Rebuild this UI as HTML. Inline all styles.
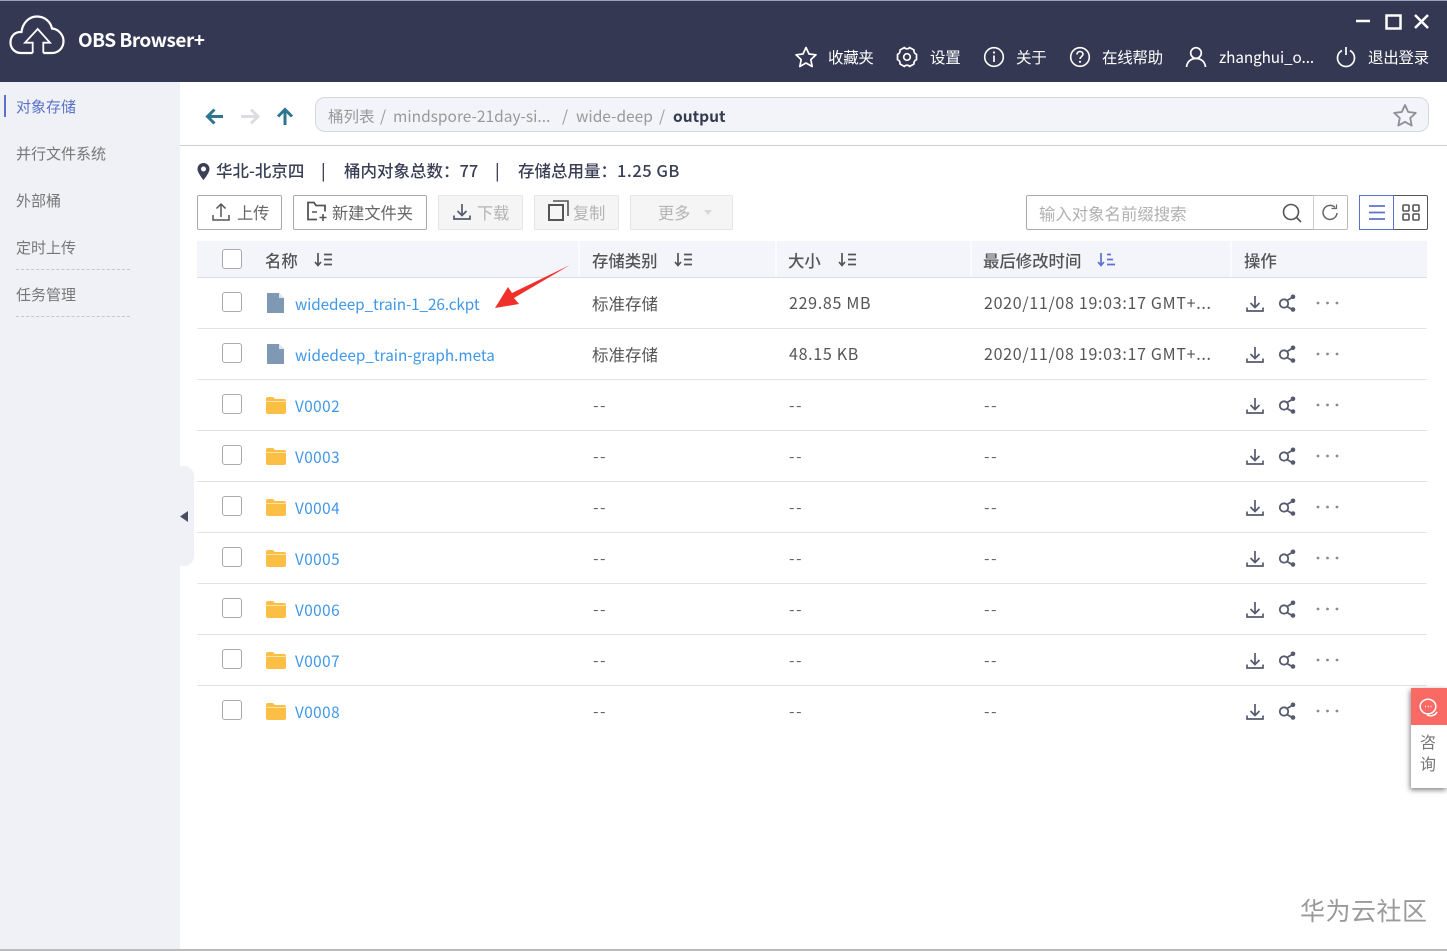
<!DOCTYPE html>
<html lang="zh"><head><meta charset="utf-8"><title>OBS Browser+</title>
<style>
*{box-sizing:border-box}
html,body{margin:0;padding:0;width:1447px;height:951px;overflow:hidden;background:#fff}
body{position:relative;font-family:"Noto Sans CJK SC","Liberation Sans",sans-serif;color:#555}
.a{position:absolute;white-space:nowrap;line-height:20px}
svg{position:absolute;overflow:visible;fill:none}
.hd{color:#fff;font-size:15.5px;letter-spacing:-.3px;top:47px}
.side{font-size:15px;color:#777;left:16px}
.btn{position:absolute;top:195px;height:35px;border:1px solid #aaa;border-radius:2px;background:#fff}
.dis{background:#f5f5f6;border-color:#e6e6e8}
.bt{font-size:16.2px;top:202px;color:#666}
.th{font-size:16.4px;color:#555;font-weight:500;top:250px}
.cb{position:absolute;left:222px;width:20px;height:20px;border:1px solid #aaa;border-radius:3px;background:#fff}
.ln{position:absolute;left:197px;width:1230px;height:1px;background:#e2e2e4}
.nm{left:295px;font-size:15.3px;color:#3f97e8}
.v{letter-spacing:.45px}
.c{font-size:16.5px;color:#555}
.m{font-size:16px;letter-spacing:.7px;color:#555}
.dd{font-size:16px;letter-spacing:1.5px;color:#666}
.inf{font-size:16.5px;font-weight:500;color:#3a3f55;top:160px}
</style></head><body>
<svg width="0" height="0" style="position:absolute"><defs>
<g id="dl" stroke="#555a6e" stroke-width="1.7"><path d="M9 1v11M4.500 8l4.500 4.500L13.500 8M1 12.500v3.500h16v-3.500"/></g>
<g id="sh"><circle cx="6" cy="8.500" r="4.200" stroke="#555a6e" stroke-width="1.800"/><path d="M9 5.500l6-3.500M9 11.500l6 3.500" stroke="#555a6e" stroke-width="1.800"/><circle cx="15" cy="1.800" r="2.300" fill="#555a6e"/><circle cx="15" cy="14.500" r="2.300" fill="#555a6e"/></g>
<g id="dots" fill="#8a8a8e"><circle cx="2" cy="2" r="1.400"/><circle cx="11.500" cy="2" r="1.400"/><circle cx="21" cy="2" r="1.400"/></g>
<g id="file"><path d="M0 0h12l5 5v15H0z" fill="#7f99b4"/><path d="M12 0l5 5h-5z" fill="#dfe6ee"/></g>
<g id="fold"><path d="M0 3a2 2 0 0 1 2-2h5l2 2h9a2 2 0 0 1 2 2v11a2 2 0 0 1-2 2H2a2 2 0 0 1-2-2z" fill="#fbbf45"/><path d="M0 5.500h20" stroke="#ffe3a6" stroke-width="1"/></g>
<g id="sort" stroke="#555" stroke-width="1.700"><path d="M4 1v12M1 10l3 3.500L7 10M10 2.500h8M10 7.500h8M10 12.500h8"/></g>
</defs></svg>

<!-- header -->
<div class="a" style="left:0;top:0;width:1447px;height:82px;background:#343853;border-top:1px solid #9aa0bb"></div>
<svg style="left:9px;top:14px" width="57" height="42"><path d="M23.700 39H12C5.500 39 1.500 34 1.500 28.500c0-6 4-10.500 10-10.500h1C13.500 9 20 2.500 28 2.500c7.500 0 13.500 5 15 12 6.500.5 11.500 6.500 11.500 12.500 0 7-5 12-11.500 12H34.300" stroke="#fff" stroke-width="2.200"/><path d="M23.700 39V28.700H16L28.700 15 41 28.700H34.300V39" stroke="#fff" stroke-width="1.800"/></svg>
<div class="a" style="left:78px;top:29px;font:700 19px/22px 'Noto Sans CJK SC','Liberation Sans',sans-serif;color:#fff;letter-spacing:-.5px">OBS Browser+</div>
<svg style="left:1355px;top:14px" width="80" height="16"><path d="M1 7h14" stroke="#fff" stroke-width="2.500"/><rect x="31.500" y="1.500" width="14" height="13" stroke="#fff" stroke-width="2.500"/><path d="M60 1l13 13M73 1L60 14" stroke="#fff" stroke-width="2.500"/></svg>
<svg style="left:795px;top:46px" width="22" height="21"><path d="M11 1.500l3 6.500 7 .8-5.200 4.800 1.400 6.900L11 17l-6.200 3.500 1.400-6.900L1 8.800 8 8z" stroke="#fff" stroke-width="1.700" stroke-linejoin="round"/></svg>
<div class="a hd" style="left:828px">收藏夹</div>
<svg style="left:896px;top:46px" width="22" height="22"><path d="M8.500 1.500C9 3.200 13 3.200 13.500 1.500L18 4C17.500 6 19 8 20.500 8.300V13.700C19 14 17.500 16 18 18L13.500 20.500C13 18.800 9 18.800 8.500 20.500L4 18C4.500 16 3 14 1.500 13.700V8.300C3 8 4.500 6 4 4z" stroke="#fff" stroke-width="1.700" stroke-linejoin="round"/><circle cx="11" cy="11" r="3.300" stroke="#fff" stroke-width="1.700"/></svg>
<div class="a hd" style="left:930px">设置</div>
<svg style="left:983px;top:46px" width="22" height="22"><circle cx="11" cy="11" r="9.300" stroke="#fff" stroke-width="1.600"/><path d="M11 9.500v6.500" stroke="#fff" stroke-width="1.700"/><circle cx="11" cy="6.500" r="1.100" fill="#fff"/></svg>
<div class="a hd" style="left:1016px">关于</div>
<svg style="left:1069px;top:46px" width="22" height="22"><circle cx="11" cy="11" r="9.300" stroke="#fff" stroke-width="1.600"/><path d="M8 8.500c0-2 1.500-3 3-3s3 1 3 2.800c0 2.200-3 2.400-3 4.700" stroke="#fff" stroke-width="1.600"/><circle cx="11" cy="15.800" r="1.100" fill="#fff"/></svg>
<div class="a hd" style="left:1102px">在线帮助</div>
<svg style="left:1185px;top:46px" width="22" height="22"><circle cx="11" cy="7" r="5.300" stroke="#fff" stroke-width="1.700"/><path d="M1.500 21c.5-5 4-8.500 9.500-8.500s9 3.500 9.500 8.500" stroke="#fff" stroke-width="1.700"/></svg>
<div class="a hd" style="left:1219px;letter-spacing:-.1px;font-size:15.3px">zhanghui_o...</div>
<svg style="left:1336px;top:46px" width="20" height="22"><path d="M6 4.500a8.500 8.500 0 1 0 8 0M10 1v8" stroke="#fff" stroke-width="1.700"/></svg>
<div class="a hd" style="left:1368px">退出登录</div>

<!-- sidebar -->
<div class="a" style="left:0;top:82px;width:180px;height:869px;background:#eff1f6"></div>
<div class="a" style="left:4px;top:95px;width:2px;height:22px;background:#5c72c9"></div>
<div class="a side" style="top:97px;color:#5c72c9">对象存储</div>
<div class="a side" style="top:144px">并行文件系统</div>
<div class="a side" style="top:191px">外部桶</div>
<div class="a side" style="top:238px">定时上传</div>
<div class="a" style="left:16px;top:269px;width:114px;border-top:1px dashed #c4c6cc"></div>
<div class="a side" style="top:285px">任务管理</div>
<div class="a" style="left:16px;top:316px;width:114px;border-top:1px dashed #c4c6cc"></div>
<div class="a" style="left:176px;top:466px;width:18px;height:100px;background:#eff1f6;border-radius:0 10px 10px 0"></div>
<svg style="left:180px;top:511px" width="9" height="11"><path d="M8 0v11L0 5.500z" fill="#4a4f60"/></svg>

<!-- nav -->
<svg style="left:205px;top:107px" width="92" height="20"><path d="M18 9.500H3M9.500 2.500L2.500 9.500l7 7" stroke="#2e7690" stroke-width="3"/><path d="M36 9.500h16M46 2.500l7 7-7 7" stroke="#dcdde0" stroke-width="3"/><path d="M80 18V3M73 9.500l7-7 7 7" stroke="#2e7690" stroke-width="3"/></svg>
<div class="a" style="left:315px;top:97px;width:1114px;height:35px;background:#f3f4fa;border:1px solid #d6d7db;border-radius:10px"></div>
<div class="a" style="left:328px;top:106px;font-size:15.500px;color:#999">桶列表<span style="position:absolute;left:52px">/</span><span style="position:absolute;left:65px">mindspore-21day-si...</span><span style="position:absolute;left:234px">/</span><span style="position:absolute;left:248px">wide-deep</span><span style="position:absolute;left:331px">/</span><span style="position:absolute;left:345px;color:#333a4c;font-weight:700">output</span></div>
<svg style="left:1393px;top:103px" width="24" height="24"><path d="M12 2l3.200 7 7.600.900-5.600 5.200 1.500 7.500L12 18.800l-6.700 3.800 1.500-7.500L1.200 9.900 8.800 9z" stroke="#8d8f96" stroke-width="1.800" stroke-linejoin="round"/></svg>
<div class="a" style="left:180px;top:145px;width:1267px;height:1px;background:#ccc"></div>

<!-- info -->
<svg style="left:197px;top:163px" width="13" height="17"><path d="M6.500 0C3 0 .5 2.600.5 6c0 4 6 11 6 11s6-7 6-11c0-3.400-2.500-6-6-6zm0 8.500a2.500 2.500 0 1 1 0-5 2.500 2.500 0 0 1 0 5z" fill="#3a3f55"/></svg>
<div class="a inf" style="left:216px">华北-北京四</div>
<div class="a inf" style="left:321px">|</div>
<div class="a inf" style="left:344px">桶内对象总数：77</div>
<div class="a inf" style="left:495px">|</div>
<div class="a inf" style="left:518px">存储总用量：<span style="letter-spacing:.5px">1.25 GB</span></div>

<!-- toolbar -->
<div class="btn" style="left:197px;width:85px"></div>
<svg style="left:212px;top:202px" width="18" height="19"><path d="M9 15V2M4.500 6.500L9 2l4.500 4.500M1 13v5h16v-5" stroke="#555" stroke-width="1.500"/></svg>
<div class="a bt" style="left:237px">上传</div>
<div class="btn" style="left:293px;width:134px"></div>
<svg style="left:307px;top:201px" width="20" height="21"><path d="M10 18.500H1V1.500h6l2 3h9v6" stroke="#555" stroke-width="1.800"/><path d="M5 11h5M16 13v7M12.500 16.500h7" stroke="#555" stroke-width="1.600"/></svg>
<div class="a bt" style="left:332px">新建文件夹</div>
<div class="btn dis" style="left:438px;width:85px"></div>
<svg style="left:453px;top:203px;" width="18" height="18"><use href="#dl"/></svg>
<div class="a bt" style="left:477px;color:#b4b4b6">下载</div>
<div class="btn dis" style="left:534px;width:85px"></div>
<svg style="left:548px;top:200px" width="21" height="21"><rect x="1" y="5" width="14" height="15" stroke="#555" stroke-width="2"/><path d="M5 1h15v15" stroke="#555" stroke-width="1.600"/></svg>
<div class="a bt" style="left:573px;color:#b4b4b6">复制</div>
<div class="btn dis" style="left:630px;width:103px"></div>
<div class="a bt" style="left:658px;color:#b4b4b6">更多</div>
<svg style="left:704px;top:210px" width="8" height="5"><path d="M0 0h8L4 5z" fill="#d8d8da"/></svg>

<div class="a" style="left:1026px;top:195px;width:288px;height:35px;border:1px solid #aaa;border-radius:2px 0 0 2px"></div>
<div class="a" style="left:1039px;top:203px;font-size:16.400px;color:#b0b0b0">输入对象名前缀搜索</div>
<svg style="left:1282px;top:203px" width="20" height="20"><circle cx="9" cy="9" r="7.500" stroke="#555" stroke-width="1.600"/><path d="M14 14l5 5" stroke="#555" stroke-width="1.600"/></svg>
<div class="a" style="left:1313px;top:195px;width:35px;height:35px;border:1px solid #bbb;border-left:1px solid #ccc;border-radius:0 2px 2px 0"></div>
<svg style="left:1322px;top:204px" width="16" height="17"><path d="M13 3.500A7 7 0 1 0 15 9" stroke="#666" stroke-width="1.500"/><path d="M9.500 4.500h5v-4" stroke="#666" stroke-width="1.200"/></svg>
<div class="a" style="left:1359px;top:195px;width:35px;height:35px;border:1px solid #5c72c9"></div>
<div class="a" style="left:1394px;top:195px;width:34px;height:35px;border:1px solid #555;border-left:0;border-radius:0 2px 2px 0"></div>
<svg style="left:1369px;top:204px" width="16" height="17"><path d="M0 2h16M0 8.500h16M0 15h16" stroke="#5c72c9" stroke-width="1.800"/></svg>
<svg style="left:1402px;top:204px" width="18" height="17"><g stroke="#555" stroke-width="1.600"><rect x="1" y="1" width="6" height="6" rx="1"/><rect x="11" y="1" width="6" height="6" rx="1"/><rect x="1" y="10" width="6" height="6" rx="1"/><rect x="11" y="10" width="6" height="6" rx="1"/></g></svg>

<!-- table head -->
<div class="a" style="left:197px;top:241px;width:1230px;height:37px;background:#f3f5fb;border-bottom:1px solid #dcdde2"></div>
<div class="a" style="left:578px;top:241px;width:2px;height:36px;background:#fafbfe"></div>
<div class="a" style="left:775px;top:241px;width:2px;height:36px;background:#fafbfe"></div>
<div class="a" style="left:970px;top:241px;width:2px;height:36px;background:#fafbfe"></div>
<div class="a" style="left:1230px;top:241px;width:2px;height:36px;background:#fafbfe"></div>
<div class="cb" style="top:249px"></div>
<div class="a th" style="left:265px">名称</div>
<svg style="left:314px;top:252px" width="19" height="15"><use href="#sort"/></svg>
<div class="a th" style="left:592px">存储类别</div>
<svg style="left:674px;top:252px" width="19" height="15"><use href="#sort"/></svg>
<div class="a th" style="left:788px">大小</div>
<svg style="left:838px;top:252px" width="19" height="15"><use href="#sort"/></svg>
<div class="a th" style="left:983px">最后修改时间</div>
<svg style="left:1097px;top:252px" width="19" height="15"><g stroke="#5c72c9" stroke-width="1.700"><path d="M4 1v12M1 10l3 3.500L7 10M10 2.500h4M10 7.500h6M10 12.500h8"/></g></svg>
<div class="a th" style="left:1244px">操作</div>

<!-- rows -->
<div class="cb" style="top:292px"></div>
<svg style="left:267px;top:293px" width="17" height="20"><use href="#file"/></svg>
<div class="a nm" style="top:294px;letter-spacing:-.1px">widedeep_train-1_26.ckpt</div>
<div class="a c" style="left:592px;top:293px">标准存储</div>
<div class="a m" style="left:789px;top:292px">229.85 MB</div>
<div class="a m" style="left:984px;top:292px">2020/11/08 19:03:17 GMT+...</div>
<svg style="left:1246px;top:295px" width="18" height="18"><use href="#dl"/></svg>
<svg style="left:1278px;top:295px" width="17" height="17"><use href="#sh"/></svg>
<svg style="left:1316px;top:301px" width="24" height="4"><use href="#dots"/></svg>
<div class="ln" style="top:328px"></div>

<div class="cb" style="top:343px"></div>
<svg style="left:267px;top:344px" width="17" height="20"><use href="#file"/></svg>
<div class="a nm" style="top:345px">widedeep_train-graph.meta</div>
<div class="a c" style="left:592px;top:344px">标准存储</div>
<div class="a m" style="left:789px;top:343px">48.15 KB</div>
<div class="a m" style="left:984px;top:343px">2020/11/08 19:03:17 GMT+...</div>
<svg style="left:1246px;top:346px" width="18" height="18"><use href="#dl"/></svg>
<svg style="left:1278px;top:346px" width="17" height="17"><use href="#sh"/></svg>
<svg style="left:1316px;top:352px" width="24" height="4"><use href="#dots"/></svg>
<div class="ln" style="top:379px"></div>

<div class="cb" style="top:394px"></div><svg style="left:266px;top:396px" width="20" height="18"><use href="#fold"/></svg><div class="a nm v" style="top:396px">V0002</div><div class="a dd" style="left:593px;top:394px">--</div><div class="a dd" style="left:789px;top:394px">--</div><div class="a dd" style="left:984px;top:394px">--</div><svg style="left:1246px;top:397px" width="18" height="18"><use href="#dl"/></svg><svg style="left:1278px;top:397px" width="17" height="17"><use href="#sh"/></svg><svg style="left:1316px;top:403px" width="24" height="4"><use href="#dots"/></svg><div class="ln" style="top:430px"></div>
<div class="cb" style="top:445px"></div><svg style="left:266px;top:447px" width="20" height="18"><use href="#fold"/></svg><div class="a nm v" style="top:447px">V0003</div><div class="a dd" style="left:593px;top:445px">--</div><div class="a dd" style="left:789px;top:445px">--</div><div class="a dd" style="left:984px;top:445px">--</div><svg style="left:1246px;top:448px" width="18" height="18"><use href="#dl"/></svg><svg style="left:1278px;top:448px" width="17" height="17"><use href="#sh"/></svg><svg style="left:1316px;top:454px" width="24" height="4"><use href="#dots"/></svg><div class="ln" style="top:481px"></div>
<div class="cb" style="top:496px"></div><svg style="left:266px;top:498px" width="20" height="18"><use href="#fold"/></svg><div class="a nm v" style="top:498px">V0004</div><div class="a dd" style="left:593px;top:496px">--</div><div class="a dd" style="left:789px;top:496px">--</div><div class="a dd" style="left:984px;top:496px">--</div><svg style="left:1246px;top:499px" width="18" height="18"><use href="#dl"/></svg><svg style="left:1278px;top:499px" width="17" height="17"><use href="#sh"/></svg><svg style="left:1316px;top:505px" width="24" height="4"><use href="#dots"/></svg><div class="ln" style="top:532px"></div>
<div class="cb" style="top:547px"></div><svg style="left:266px;top:549px" width="20" height="18"><use href="#fold"/></svg><div class="a nm v" style="top:549px">V0005</div><div class="a dd" style="left:593px;top:547px">--</div><div class="a dd" style="left:789px;top:547px">--</div><div class="a dd" style="left:984px;top:547px">--</div><svg style="left:1246px;top:550px" width="18" height="18"><use href="#dl"/></svg><svg style="left:1278px;top:550px" width="17" height="17"><use href="#sh"/></svg><svg style="left:1316px;top:556px" width="24" height="4"><use href="#dots"/></svg><div class="ln" style="top:583px"></div>
<div class="cb" style="top:598px"></div><svg style="left:266px;top:600px" width="20" height="18"><use href="#fold"/></svg><div class="a nm v" style="top:600px">V0006</div><div class="a dd" style="left:593px;top:598px">--</div><div class="a dd" style="left:789px;top:598px">--</div><div class="a dd" style="left:984px;top:598px">--</div><svg style="left:1246px;top:601px" width="18" height="18"><use href="#dl"/></svg><svg style="left:1278px;top:601px" width="17" height="17"><use href="#sh"/></svg><svg style="left:1316px;top:607px" width="24" height="4"><use href="#dots"/></svg><div class="ln" style="top:634px"></div>
<div class="cb" style="top:649px"></div><svg style="left:266px;top:651px" width="20" height="18"><use href="#fold"/></svg><div class="a nm v" style="top:651px">V0007</div><div class="a dd" style="left:593px;top:649px">--</div><div class="a dd" style="left:789px;top:649px">--</div><div class="a dd" style="left:984px;top:649px">--</div><svg style="left:1246px;top:652px" width="18" height="18"><use href="#dl"/></svg><svg style="left:1278px;top:652px" width="17" height="17"><use href="#sh"/></svg><svg style="left:1316px;top:658px" width="24" height="4"><use href="#dots"/></svg><div class="ln" style="top:685px"></div>
<div class="cb" style="top:700px"></div><svg style="left:266px;top:702px" width="20" height="18"><use href="#fold"/></svg><div class="a nm v" style="top:702px">V0008</div><div class="a dd" style="left:593px;top:700px">--</div><div class="a dd" style="left:789px;top:700px">--</div><div class="a dd" style="left:984px;top:700px">--</div><svg style="left:1246px;top:703px" width="18" height="18"><use href="#dl"/></svg><svg style="left:1278px;top:703px" width="17" height="17"><use href="#sh"/></svg><svg style="left:1316px;top:709px" width="24" height="4"><use href="#dots"/></svg>

<!-- red arrow -->
<svg style="left:494px;top:264px" width="78" height="46"><path d="M76 1L20 34l5 6L1 44l13-21 4 6z" fill="#f0302a"/></svg>

<!-- consult widget -->
<div class="a" style="left:1411px;top:688px;width:36px;height:100px;background:#fff;box-shadow:-1px 2px 5px rgba(0,0,0,.5)"></div>
<div class="a" style="left:1411px;top:688px;width:36px;height:37px;background:#f96a65"></div>
<svg style="left:1419px;top:698px" width="20" height="19"><ellipse cx="9" cy="8.500" rx="7.800" ry="7.300" stroke="#fff" stroke-width="1.500"/><path d="M6 8.500h.900M8.800 8.500h.900M11.600 8.500h.900" stroke="#fff" stroke-width="1.400"/><path d="M8 17c3 1.500 8 1 10-3" stroke="#fff" stroke-width="1.400"/></svg>
<div class="a" style="left:1420px;top:731px;font-size:16px;color:#777">咨</div>
<div class="a" style="left:1420px;top:753px;font-size:16px;color:#777">询</div>

<div class="a" style="left:1300px;top:895px;font-size:25px;line-height:30px;color:#9a9a9a;letter-spacing:.5px">华为云社区</div>
<div class="a" style="left:0;top:949px;width:1447px;height:2px;background:#bbb"></div>
</body></html>
